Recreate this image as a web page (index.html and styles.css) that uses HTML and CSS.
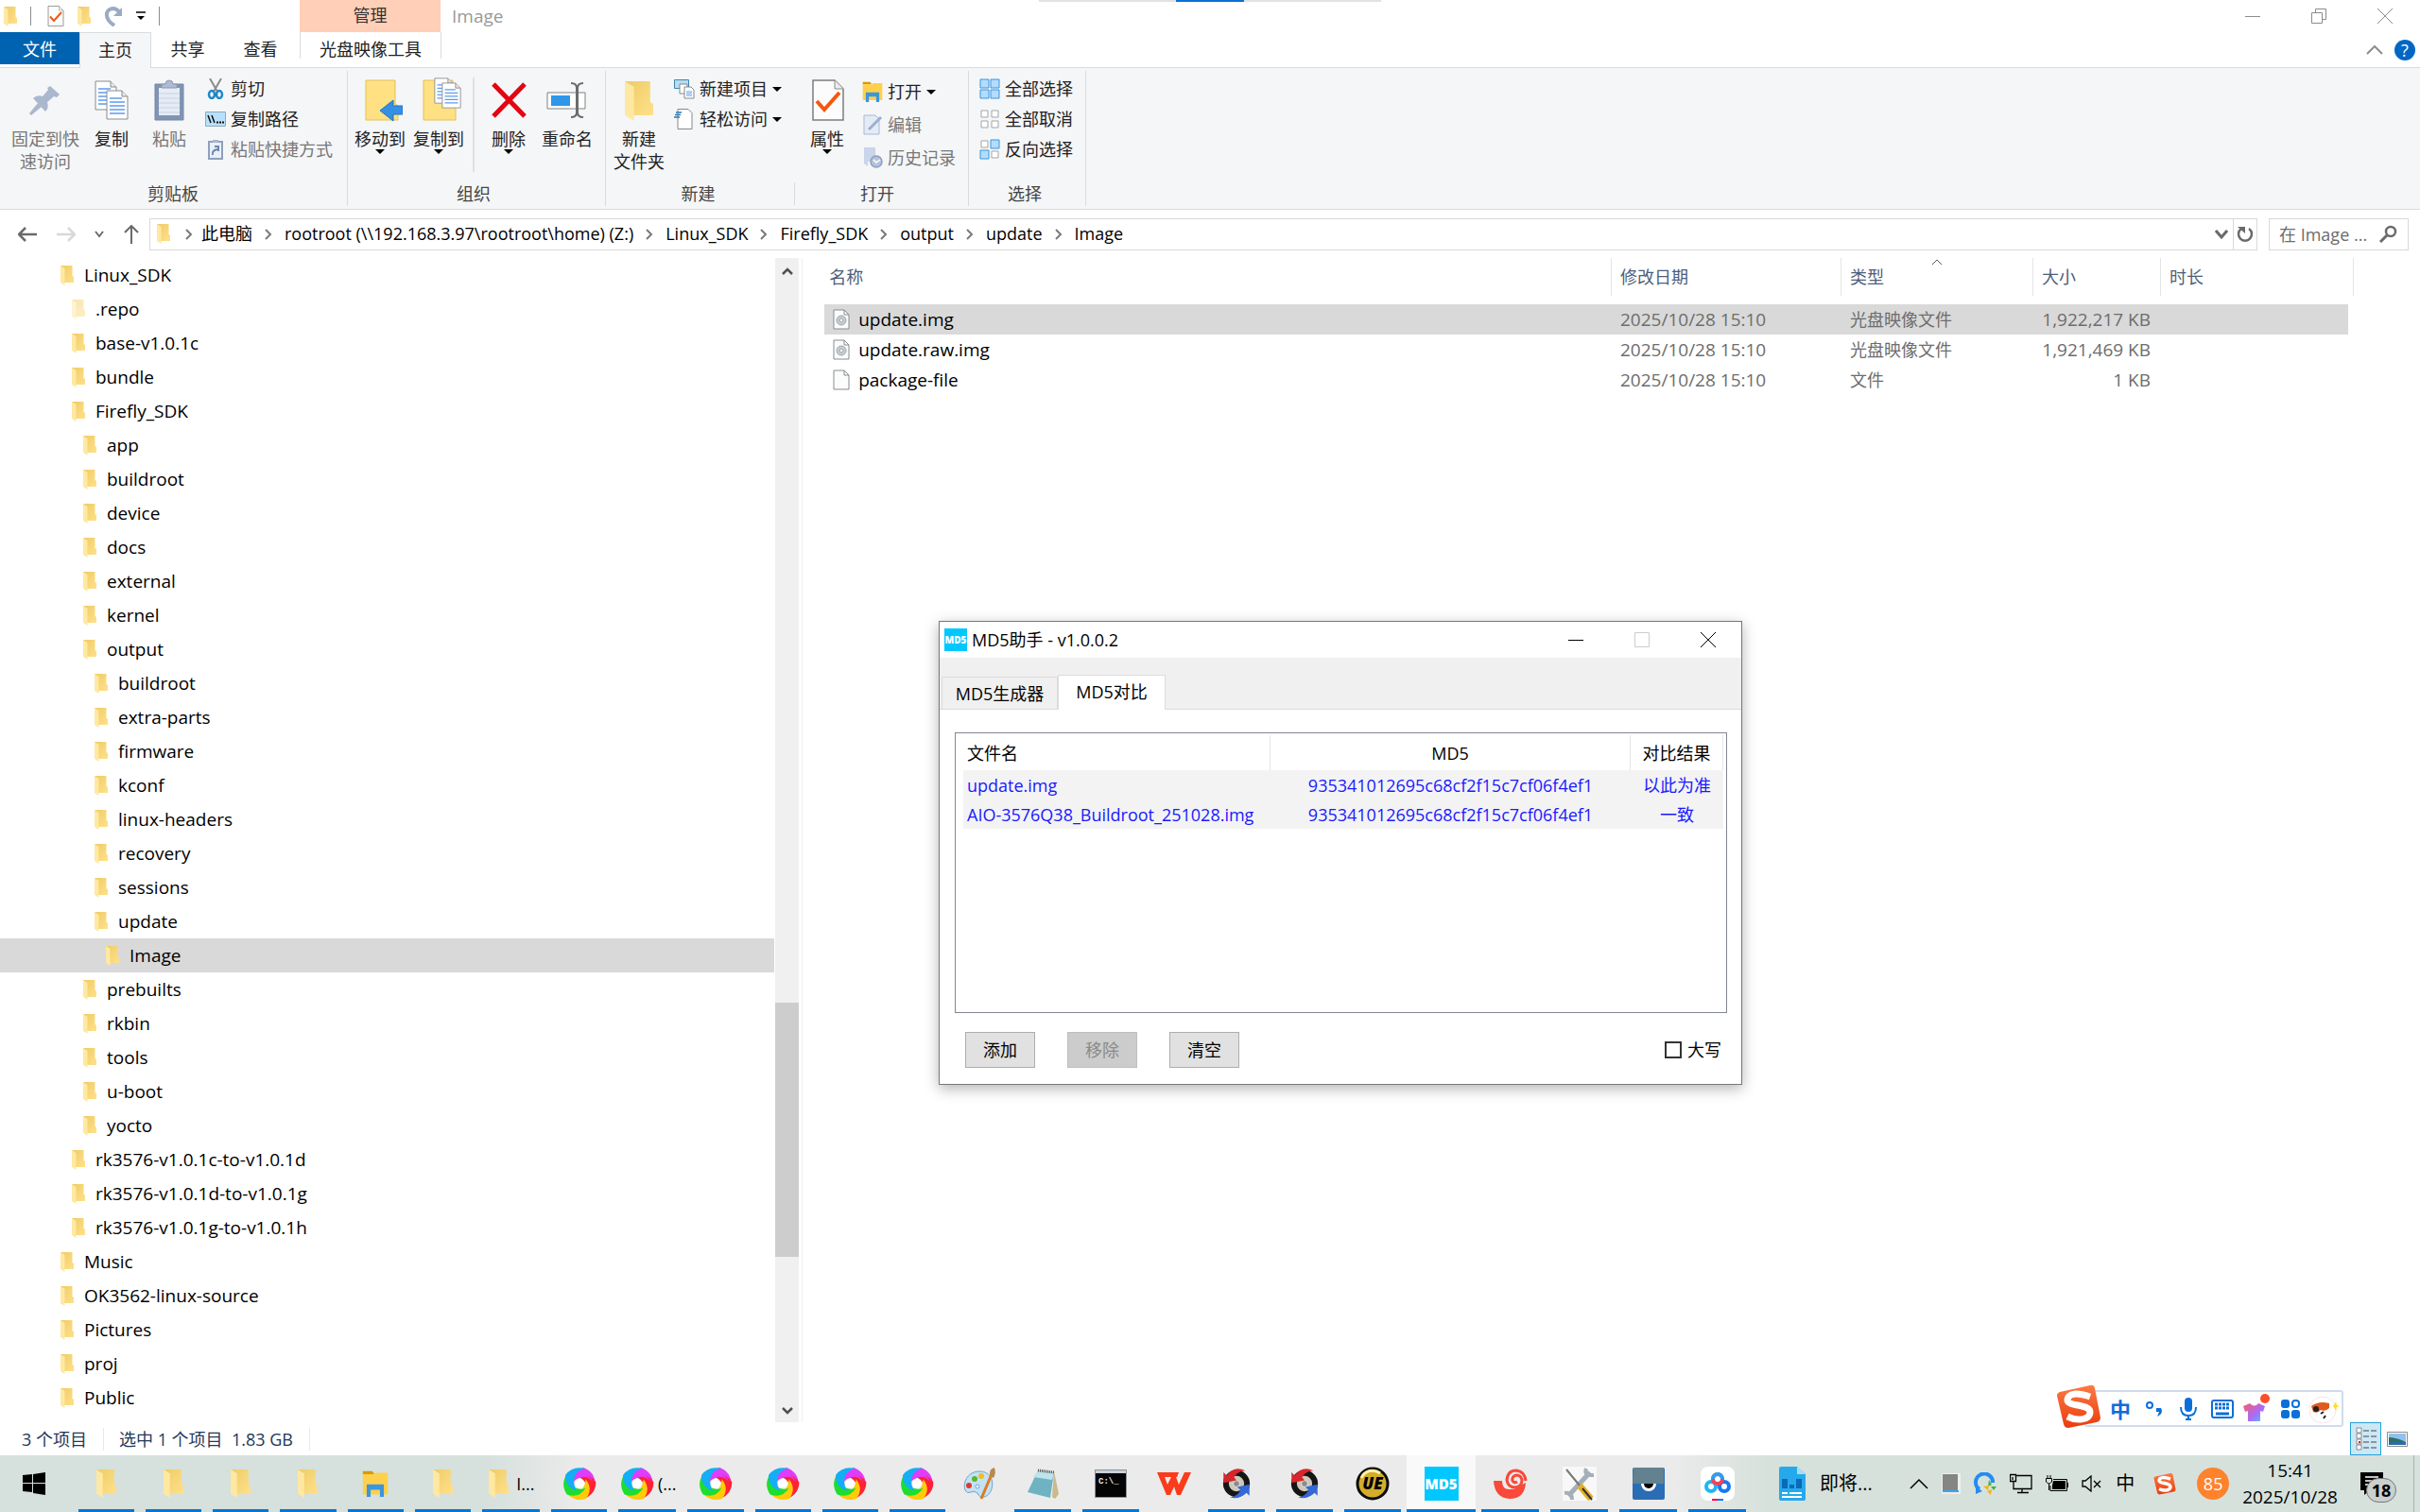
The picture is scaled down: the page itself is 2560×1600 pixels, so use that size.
FILE: index.html
```html
<!DOCTYPE html>
<html lang="zh-CN">
<head>
  <meta charset="UTF-8" />
  <meta name="viewport" content="width=device-width, initial-scale=1" />
  <title>Image</title>
  <link rel="stylesheet" href="styles.css">
</head>
<body>
  <!-- Shared icons -->
  <svg class="defs" aria-hidden="true">
    <defs>
      <linearGradient id="gold" x1="0" x2="1" y1="0" y2="1">
        <stop offset="0" stop-color="#eecb67"/>
        <stop offset="1" stop-color="#ffe18a"/>
      </linearGradient>
      <linearGradient id="sogou" x1="0" x2="0" y1="0" y2="1">
        <stop offset="0" stop-color="#fb7a45"/>
        <stop offset="1" stop-color="#ea3c0c"/>
      </linearGradient>
    </defs>
    <symbol id="folder" viewBox="0 0 14 21" preserveAspectRatio="none">
      <path d="M0 0h12.5v11l1.5 1v6H4z" fill="url(#gold)"/>
      <path d="M0 0l4.5 3v18L0 18z" fill="#ffe8a2"/>
    </symbol>
    <symbol id="page" viewBox="0 0 18 22">
      <path d="M1 1h11l5 5v15H1z" fill="#fbfcfd" stroke="#8b8b8b"/>
      <path d="M12 1v5h5" fill="none" stroke="#8b8b8b"/>
    </symbol>
    <symbol id="disc" viewBox="0 0 18 22">
      <path d="M1 1h11l5 5v15H1z" fill="#fbfcfd" stroke="#8b8b8b"/>
      <path d="M12 1v5h5" fill="none" stroke="#8b8b8b"/>
      <circle cx="9" cy="12" r="5" fill="#c9ced1" stroke="#a0a7ab"/>
      <circle cx="9" cy="12" r="2" fill="#fff" stroke="#9aa0a4"/>
    </symbol>
    <symbol id="lines" viewBox="0 0 24 32">
      <path d="M1 1h16l6 6v24H1z" fill="#fff" stroke="#8a8a8a"/>
      <path d="M17 1v6h6" fill="#e8e8e8" stroke="#8a8a8a"/>
      <path d="M4 9h13M4 13h16M4 17h16M4 21h16M4 25h16" stroke="#5e9cec" stroke-width="1.3"/>
    </symbol>
    <symbol id="explorer" viewBox="0 0 32 34">
      <path d="M0 1h12l3 4H0z" fill="#d99a00"/>
      <path d="M0 5h15l2-2h15v28H0z" fill="#ffd04c"/>
      <path d="M5 18h22v16h-5v-9H10v9H5z" fill="#3a96dd"/>
    </symbol>
    <symbol id="check" viewBox="0 0 34 44">
      <path d="M1 1h23l9 9v33H1z" fill="#fcfcfc" stroke="#7c7c7c" stroke-width="1.5"/>
      <path d="M24 1v9h9" fill="#ececec" stroke="#8b8b8b"/>
      <path d="M5 23l8 9 16-18" fill="none" stroke="#f4570f" stroke-width="4"/>
    </symbol>
    <symbol id="swirl" viewBox="0 0 36 36">
      <path d="M10 18Q9 5 22 1q12 4 13 18-4-9-13-8-8 1-12 7z" fill="#e03cfa"/>
      <path d="M10 18Q9 5 22 1q12 4 13 18-4-9-13-8-8 1-12 7z" fill="#ff2134" transform="rotate(72 18 18)"/>
      <path d="M10 18Q9 5 22 1q12 4 13 18-4-9-13-8-8 1-12 7z" fill="#ffcb08" transform="rotate(144 18 18)"/>
      <path d="M10 18Q9 5 22 1q12 4 13 18-4-9-13-8-8 1-12 7z" fill="#1ddd2e" transform="rotate(216 18 18)"/>
      <path d="M10 18Q9 5 22 1q12 4 13 18-4-9-13-8-8 1-12 7z" fill="#13aef5" transform="rotate(288 18 18)"/>
      <path d="M12 14Q16 7 23 8q7 2 9 8-5-6-11-5-6 1-9 3z" fill="#e03cfa"/>
      <circle cx="18" cy="18" r="5" fill="#fff"/>
    </symbol>
    <symbol id="sogou-s" viewBox="0 0 48 48">
      <path d="M4 9L36 2q4-1 5 3l6 31q0 4-4 5l-30 6q-4 0-5-4L1 13q0-3 3-4z" fill="url(#sogou)"/>
      <path d="M36 14Q14 7 12 17c-1 8 25 4 24 14-1 8-14 9-24 4" fill="none" stroke="#fff" stroke-width="7"/>
    </symbol>
    <symbol id="wheel" viewBox="0 0 34 42">
      <circle cx="17" cy="21" r="13" fill="#cfc8b8" stroke="#161616" stroke-width="7"/>
      <circle cx="17" cy="21" r="4" fill="#8c8c8c" stroke="#eee"/>
      <path d="M1 20V7l4 4Q14-2 28 5q-9 0-14 8l3 4z" fill="#d8262c"/>
      <path d="M33 22v14l-4-4q-8 9-20 6 9-1 13-9l-4-4z" fill="#3268d8"/>
    </symbol>
    <symbol id="chevron" viewBox="0 0 8 12"><path d="M1 1l5 5-5 5" fill="none" stroke="#7a7a7a" stroke-width="2"/></symbol>
    <symbol id="clipboard" viewBox="0 0 32 44">
      <path d="M1 5h30v38H1z" fill="#8194b4" stroke="#7486a6"/>
      <path d="M5 9h22v29H5z" fill="#e6ecf5"/>
      <path d="M5 15h22M5 20h22M5 25h22M5 30h22M5 35h22" stroke="#c6d2e3"/>
      <path d="M8 9V5h4q0-4 4-4t4 4h4v4z" fill="#aebbd0" stroke="#8a9ab6"/>
    </symbol>
  </svg>

  <div class="screen-notch"><span></span></div>

  <!-- Title bar -->
  <header class="titlebar">
    <div class="quick-access">
      <svg class="ico-folder"><use href="#folder"/></svg>
      <i class="bar"></i>
      <button aria-label="属性"><svg width="18" height="22"><use href="#check"/></svg></button>
      <button aria-label="新建文件夹"><svg class="ico-folder"><use href="#folder"/></svg></button>
      <button aria-label="恢复"><svg width="20" height="22" viewBox="0 0 20 22"><path d="M11 21C0 14 1 4 9 3q5 0 8 5" fill="none" stroke="#9aabc6" stroke-width="4"/><path d="M19 2v9h-9z" fill="#9aabc6"/></svg></button>
      <button aria-label="自定义"><svg width="10" height="10" viewBox="0 0 10 10"><path d="M0 1h10" stroke="#000" stroke-width="1.5"/><path d="M1 5h8L5 9z"/></svg></button>
      <i class="bar"></i>
    </div>
    <div class="context-tab">管理</div>
    <h1>Image</h1>
    <div class="window-buttons">
      <button aria-label="最小化"><svg width="16" height="16"><path d="M0 8.500h16" stroke="#8c8c8c"/></svg></button>
      <button aria-label="还原"><svg width="16" height="16"><path d="M.5 4.500h11v11h-11zM4.500 4V.5h11v11H12" fill="none" stroke="#8c8c8c"/></svg></button>
      <button aria-label="关闭"><svg width="16" height="16"><path d="M0 0l16 16M16 0L0 16" stroke="#8c8c8c"/></svg></button>
    </div>
  </header>

  <!-- Ribbon tabs -->
  <nav class="tabs">
    <a href="#" class="file">文件</a>
    <a href="#" class="active">主页</a>
    <a href="#">共享</a>
    <a href="#">查看</a>
    <a href="#" class="tools">光盘映像工具</a>
    <div class="tabs-right">
      <button aria-label="折叠功能区"><svg width="18" height="10" viewBox="0 0 18 10"><path d="M1 9l8-8 8 8" fill="none" stroke="#8c8c8c" stroke-width="2"/></svg></button>
      <button class="help" aria-label="帮助">?</button>
    </div>
  </nav>

  <!-- Ribbon -->
  <section class="ribbon">
    <div class="group clip">
      <div class="tools-row">
        <button class="big wide" disabled>
          <svg viewBox="0 0 48 48"><g fill="#a9b7cf"><path d="M29 9l10 9-3 3-3-1-7 6q2 7-2 10L11 22q4-4 10-2l6-7-1-2z"/><path d="M16 27l4 4L9 40l-2-2z"/></g></svg>
          <span>固定到快速访问</span>
        </button>
        <button class="big copy">
          <svg viewBox="0 0 48 48"><use href="#lines" x="6" y="3" width="24" height="32"/><use href="#lines" x="18" y="13" width="24" height="32"/></svg>
          <span>复制</span>
        </button>
        <button class="big paste" disabled>
          <svg viewBox="0 0 48 48"><use href="#clipboard" x="8" y="2" width="32" height="44"/></svg>
          <span>粘贴</span>
        </button>
        <div class="stack">
          <button><svg viewBox="0 0 22 22"><path d="M5 0l8 14M17 0L9 14" stroke="#8c8c8c" stroke-width="2"/><g fill="none" stroke="#1e88c9" stroke-width="2.500"><ellipse cx="7" cy="17" rx="3" ry="4"/><ellipse cx="15" cy="17" rx="3" ry="4"/></g></svg>剪切</button>
          <button><svg viewBox="0 0 22 22"><path d="M.5 3.500h21v15H.5z" fill="#b9e0fb" stroke="#8ca9bf"/><path d="M3 7l3 8M7 7l3 8" stroke="#111" stroke-width="1.500"/><path d="M12 14.500h8" stroke="#111" stroke-width="2" stroke-dasharray="2 1"/></svg>复制路径</button>
          <button disabled><svg viewBox="0 0 22 22"><path d="M4 3h14v18H4z" fill="#eaf0f8" stroke="#8fa0bd" stroke-width="2"/><path d="M8 4V1h6v3" fill="#a9b7cf"/><path d="M8 17q-1-5 5-6M10 8h4v5" fill="none" stroke="#6d86b2" stroke-width="2"/></svg>粘贴快捷方式</button>
        </div>
      </div>
      <h2>剪贴板</h2>
    </div>

    <div class="group organize">
      <div class="tools-row">
        <button class="big drop">
          <svg viewBox="0 0 48 48"><path d="M9 3h31v25l3 2v15H9z" fill="#ffe184" stroke="#e3bf57"/><path d="M48 30v9H38v7L24 35l14-11v6z" fill="#3590e4" stroke="#2273bd"/></svg>
          <span>移动到</span>
        </button>
        <button class="big drop">
          <svg viewBox="0 0 48 48"><path d="M8 3h31v25l3 2v15H8z" fill="#ffe184" stroke="#e3bf57"/><use href="#lines" x="19" y="0" width="21" height="28"/><use href="#lines" x="27" y="5" width="21" height="28"/></svg>
          <span>复制到</span>
        </button>
        <i class="split"></i>
        <button class="big drop">
          <svg viewBox="0 0 48 48"><path d="M8 7l33 34M41 7L8 41" stroke="#e20613" stroke-width="5"/></svg>
          <span>删除</span>
        </button>
        <button class="big">
          <svg viewBox="0 0 48 48"><path d="M3 16h40v17H3z" fill="#fff" stroke="#808080"/><path d="M7 19h20v11H7z" fill="#2f96ea"/><path d="M28 6q6 0 6 5v26q0 5-6 5M41 6q-6 0-6 5v26q0 5 6 5" fill="none" stroke="#6c6c6c" stroke-width="2"/></svg>
          <span>重命名</span>
        </button>
      </div>
      <h2>组织</h2>
    </div>

    <div class="group create">
      <div class="tools-row">
        <button class="big copy">
          <svg viewBox="0 0 48 48"><use href="#folder" x="9" y="4" width="30" height="42"/></svg>
          <span>新建<br>文件夹</span>
        </button>
        <div class="stack">
          <button class="more"><svg viewBox="0 0 22 22"><path d="M.5 1.500h15v9H.5z" fill="#b9dcef" stroke="#3d85ad"/><path d="M6 6h8v10H6z" fill="#fff" stroke="#888"/><path d="M11 9h7l3 3v9H11z" fill="#fff" stroke="#888"/><path d="M13 14h6M13 16h6M13 18h6" stroke="#5e9cec"/></svg>新建项目</button>
          <button class="more"><svg viewBox="0 0 22 22"><path d="M4 .5h11l4 4v17H4z" fill="#fff" stroke="#888"/><path d="M2 4h6M1 6.500h6M0 9h6" stroke="#2b77ae" stroke-width="1.500"/></svg>轻松访问</button>
        </div>
      </div>
      <h2>新建</h2>
    </div>

    <div class="group open">
      <div class="tools-row">
        <button class="big drop copy">
          <svg viewBox="0 0 48 48"><use href="#check" x="8" y="2" width="34" height="44"/></svg>
          <span>属性</span>
        </button>
        <div class="stack loose">
          <button class="more"><svg viewBox="0 0 22 22"><use href="#explorer" width="22" height="22"/></svg>打开</button>
          <button disabled><svg viewBox="0 0 22 22"><path d="M2 1h12l4 4v16H2z" fill="#e4ebf6" stroke="#a9b9d2"/><path d="M7 16l13-13" stroke="#9db0cf" stroke-width="3"/></svg>编辑</button>
          <button disabled><svg viewBox="0 0 22 22"><path d="M2 0h12v15H6v5l-4-3z" fill="#c8d5ea"/><circle cx="15" cy="15" r="6" fill="#b4c3dc" stroke="#8da0c1" stroke-width="1.500"/><path d="M12 13l3 3 4-3" fill="none" stroke="#fff" stroke-width="1.500"/></svg>历史记录</button>
        </div>
      </div>
      <h2>打开</h2>
    </div>

    <div class="group select">
      <div class="tools-row">
        <div class="stack">
          <button><svg viewBox="0 0 22 22"><path d="M1 1h9v9H1zM12 1h9v9h-9zM1 12h9v9H1zM12 12h9v9h-9z" fill="#b3dcfd" stroke="#3a96dd"/></svg>全部选择</button>
          <button><svg viewBox="0 0 22 22"><path d="M2 2h7v7H2zM13 2h7v7h-7zM2 13h7v7H2zM13 13h7v7h-7z" fill="#fff" stroke="#a5a5a5"/></svg>全部取消</button>
          <button><svg viewBox="0 0 22 22"><path d="M2 2h7v7H2zM13 13h7v7h-7z" fill="#fff" stroke="#a5a5a5"/><path d="M12 1h9v9h-9zM1 12h9v9H1z" fill="#b3dcfd" stroke="#3a96dd"/></svg>反向选择</button>
        </div>
      </div>
      <h2>选择</h2>
    </div>
  </section>

  <!-- Address bar -->
  <div class="address-row">
    <div class="nav-buttons">
      <button aria-label="后退"><svg width="20" height="16" viewBox="0 0 20 16"><path d="M1 8h19M8 1L1 8l7 7" fill="none" stroke="#6a6a6a" stroke-width="2.500"/></svg></button>
      <button aria-label="前进"><svg width="20" height="16" viewBox="0 0 20 16"><path d="M0 8h19M12 1l7 7-7 7" fill="none" stroke="#d8d8d8" stroke-width="2.500"/></svg></button>
      <button aria-label="最近位置"><svg width="10" height="8" viewBox="0 0 10 8"><path d="M1 1l4 5 4-5" fill="none" stroke="#6a6a6a" stroke-width="2"/></svg></button>
      <button aria-label="上移"><svg width="16" height="20" viewBox="0 0 16 20"><path d="M8 20V1M1 8l7-7 7 7" fill="none" stroke="#6a6a6a" stroke-width="2"/></svg></button>
    </div>
    <nav class="crumbs">
      <svg class="ico-folder"><use href="#folder"/></svg>
      <svg class="sep"><use href="#chevron"/></svg><a href="#">此电脑</a>
      <svg class="sep"><use href="#chevron"/></svg><a href="#">rootroot (\\192.168.3.97\rootroot\home) (Z:)</a>
      <svg class="sep"><use href="#chevron"/></svg><a href="#">Linux_SDK</a>
      <svg class="sep"><use href="#chevron"/></svg><a href="#">Firefly_SDK</a>
      <svg class="sep"><use href="#chevron"/></svg><a href="#">output</a>
      <svg class="sep"><use href="#chevron"/></svg><a href="#">update</a>
      <svg class="sep"><use href="#chevron"/></svg><a href="#">Image</a>
      <button class="history" aria-label="以前的位置"><svg width="14" height="12" viewBox="0 0 14 12"><path d="M1 2l6 7 6-7" fill="none" stroke="#6a6a6a" stroke-width="3"/></svg></button>
      <button class="refresh" aria-label="刷新"><svg width="18" height="18" viewBox="0 0 18 18"><path d="M13 3a7 7 0 1 1-8 0" fill="none" stroke="#6a6a6a" stroke-width="2.500"/><path d="M1 1h8v7z" fill="#6a6a6a"/></svg></button>
    </nav>
    <label class="search">
      <input type="text" aria-label="搜索" placeholder="在 Image ...">
      <svg width="20" height="20" viewBox="0 0 20 20"><circle cx="12" cy="7" r="5" fill="none" stroke="#6a6a6a" stroke-width="2.500"/><path d="M8 11l-7 7" stroke="#6a6a6a" stroke-width="3"/></svg>
    </label>
  </div>

  <main class="panes">
    <!-- Folder tree -->
    <ul class="tree">
      <li class="l0"><svg class="ico-folder"><use href="#folder"/></svg><a href="#">Linux_SDK</a></li>
      <li class="l1 hidden-item"><svg class="ico-folder"><use href="#folder"/></svg><a href="#">.repo</a></li>
      <li class="l1"><svg class="ico-folder"><use href="#folder"/></svg><a href="#">base-v1.0.1c</a></li>
      <li class="l1"><svg class="ico-folder"><use href="#folder"/></svg><a href="#">bundle</a></li>
      <li class="l1"><svg class="ico-folder"><use href="#folder"/></svg><a href="#">Firefly_SDK</a></li>
      <li class="l2"><svg class="ico-folder"><use href="#folder"/></svg><a href="#">app</a></li>
      <li class="l2"><svg class="ico-folder"><use href="#folder"/></svg><a href="#">buildroot</a></li>
      <li class="l2"><svg class="ico-folder"><use href="#folder"/></svg><a href="#">device</a></li>
      <li class="l2"><svg class="ico-folder"><use href="#folder"/></svg><a href="#">docs</a></li>
      <li class="l2"><svg class="ico-folder"><use href="#folder"/></svg><a href="#">external</a></li>
      <li class="l2"><svg class="ico-folder"><use href="#folder"/></svg><a href="#">kernel</a></li>
      <li class="l2"><svg class="ico-folder"><use href="#folder"/></svg><a href="#">output</a></li>
      <li class="l3"><svg class="ico-folder"><use href="#folder"/></svg><a href="#">buildroot</a></li>
      <li class="l3"><svg class="ico-folder"><use href="#folder"/></svg><a href="#">extra-parts</a></li>
      <li class="l3"><svg class="ico-folder"><use href="#folder"/></svg><a href="#">firmware</a></li>
      <li class="l3"><svg class="ico-folder"><use href="#folder"/></svg><a href="#">kconf</a></li>
      <li class="l3"><svg class="ico-folder"><use href="#folder"/></svg><a href="#">linux-headers</a></li>
      <li class="l3"><svg class="ico-folder"><use href="#folder"/></svg><a href="#">recovery</a></li>
      <li class="l3"><svg class="ico-folder"><use href="#folder"/></svg><a href="#">sessions</a></li>
      <li class="l3"><svg class="ico-folder"><use href="#folder"/></svg><a href="#">update</a></li>
      <li class="l4 selected"><svg class="ico-folder"><use href="#folder"/></svg><a href="#">Image</a></li>
      <li class="l2"><svg class="ico-folder"><use href="#folder"/></svg><a href="#">prebuilts</a></li>
      <li class="l2"><svg class="ico-folder"><use href="#folder"/></svg><a href="#">rkbin</a></li>
      <li class="l2"><svg class="ico-folder"><use href="#folder"/></svg><a href="#">tools</a></li>
      <li class="l2"><svg class="ico-folder"><use href="#folder"/></svg><a href="#">u-boot</a></li>
      <li class="l2"><svg class="ico-folder"><use href="#folder"/></svg><a href="#">yocto</a></li>
      <li class="l1"><svg class="ico-folder"><use href="#folder"/></svg><a href="#">rk3576-v1.0.1c-to-v1.0.1d</a></li>
      <li class="l1"><svg class="ico-folder"><use href="#folder"/></svg><a href="#">rk3576-v1.0.1d-to-v1.0.1g</a></li>
      <li class="l1"><svg class="ico-folder"><use href="#folder"/></svg><a href="#">rk3576-v1.0.1g-to-v1.0.1h</a></li>
      <li class="l0"><svg class="ico-folder"><use href="#folder"/></svg><a href="#">Music</a></li>
      <li class="l0"><svg class="ico-folder"><use href="#folder"/></svg><a href="#">OK3562-linux-source</a></li>
      <li class="l0"><svg class="ico-folder"><use href="#folder"/></svg><a href="#">Pictures</a></li>
      <li class="l0"><svg class="ico-folder"><use href="#folder"/></svg><a href="#">proj</a></li>
      <li class="l0"><svg class="ico-folder"><use href="#folder"/></svg><a href="#">Public</a></li>
    </ul>
    <div class="scrollbar">
      <svg width="12" height="8" viewBox="0 0 12 8"><path d="M1 7l5-5 5 5" fill="none" stroke="#505050" stroke-width="2.500"/></svg>
      <div class="track"><span class="thumb"></span></div>
      <svg width="12" height="8" viewBox="0 0 12 8"><path d="M1 1l5 5 5-5" fill="none" stroke="#505050" stroke-width="2.500"/></svg>
    </div>

    <!-- File list -->
    <div class="files">
      <table>
        <colgroup><col><col class="c-date"><col class="c-type"><col class="c-size"><col class="c-len"></colgroup>
        <thead>
          <tr><th>名称</th><th>修改日期</th><th class="sorted">类型<svg width="12" height="7" viewBox="0 0 12 7"><path d="M1 6l5-5 5 5" fill="none" stroke="#5a5a5a"/></svg></th><th>大小</th><th>时长</th></tr>
        </thead>
        <tbody>
          <tr class="selected"><td><svg><use href="#disc"/></svg><a href="#">update.img</a></td><td>2025/10/28 15:10</td><td>光盘映像文件</td><td>1,922,217 KB</td><td></td></tr>
          <tr><td><svg><use href="#disc"/></svg><a href="#">update.raw.img</a></td><td>2025/10/28 15:10</td><td>光盘映像文件</td><td>1,921,469 KB</td><td></td></tr>
          <tr><td><svg><use href="#page"/></svg><a href="#">package-file</a></td><td>2025/10/28 15:10</td><td>文件</td><td>1 KB</td><td></td></tr>
        </tbody>
      </table>
    </div>
  </main>

  <!-- Status bar -->
  <footer class="status">
    <span>3 个项目</span>
    <span>选中 1 个项目&nbsp; 1.83 GB</span>
    <div class="views">
      <button class="on" aria-label="详细信息"><svg width="22" height="26" viewBox="0 0 22 26"><path d="M1 1h5v5H1zM1 7h5v5H1zM1 13h5v5H1zM1 19h5v5H1z" fill="#fff" stroke="#8a8a8a"/><path d="M8 4h14M8 10h14M8 16h14M8 22h14" stroke="#7a7a7a" stroke-width="1.500" stroke-dasharray="6 2"/><path d="M3 15h2v2H3z" fill="#c22"/></svg></button>
      <button aria-label="大图标"><svg width="22" height="16" viewBox="0 0 22 16"><path d="M.5.5h21v15H.5z" fill="#fff" stroke="#8a8a8a"/><path d="M2 2h18v12H2z" fill="#8fc1f0"/><path d="M2 6q8 0 18 5v3H2z" fill="#33705c"/><path d="M2 11h18v3H2z" fill="#2a6ea5"/></svg></button>
    </div>
  </footer>

  <!-- Taskbar -->
  <div class="taskbar">
    <button class="start" aria-label="开始"><svg width="24" height="24" viewBox="0 0 24 24"><path d="M0 3l10-1v9H0zM11 2l13-2v11H11zM0 12h10v9L0 20zM11 12h13v12l-13-2z"/></svg></button>
    <div class="task-group folders">
      <button class="running"><svg width="21" height="30"><use href="#folder"/></svg></button>
      <button class="running"><svg width="21" height="30"><use href="#folder"/></svg></button>
      <button class="running"><svg width="21" height="30"><use href="#folder"/></svg></button>
      <button class="running"><svg width="21" height="30"><use href="#folder"/></svg></button>
      <button class="running"><svg width="32" height="28"><use href="#explorer"/></svg></button>
      <button class="running"><svg width="21" height="30"><use href="#folder"/></svg></button>
      <button class="running named"><svg width="21" height="30"><use href="#folder"/></svg>I...</button>
    </div>
    <div class="task-group browsers">
      <button class="running"><svg width="36" height="36"><use href="#swirl"/></svg></button>
      <button class="running named"><svg width="36" height="36"><use href="#swirl"/></svg>(...</button>
      <button class="running"><svg width="36" height="36"><use href="#swirl"/></svg></button>
      <button class="running"><svg width="36" height="36"><use href="#swirl"/></svg></button>
      <button class="running"><svg width="36" height="36"><use href="#swirl"/></svg></button>
      <button class="running"><svg width="36" height="36"><use href="#swirl"/></svg></button>
    </div>
    <div class="task-group apps">
      <button class="pinned" aria-label="画图"><svg width="36" height="36" viewBox="0 0 36 36"><path d="M17 5C6 5-1 15 2 25q2 4 6 2t7 1q2 5 7 4c11-2 14-27-5-27z" fill="#c4e2f5" stroke="#6aa5cb"/><circle cx="6" cy="20" r="3" fill="#e0392b"/><circle cx="12" cy="13" r="3" fill="#5cb531"/><circle cx="19" cy="10" r="3" fill="#f5bb1c"/><circle cx="15" cy="21" r="2" fill="#fff" stroke="#6aa5cb"/><path d="M19 34L30 8" stroke="#dc7c21" stroke-width="3"/><path d="M28 10q-1-8 5-9 2 6-1 11z" fill="#b98850"/></svg></button>
      <button class="running" aria-label="记事本"><svg width="34" height="34" viewBox="0 0 34 34"><path d="M29 4l5 24-4 5-3-2z" fill="#c9b98c"/><path d="M12 3l17 2-4 27L1 26z" fill="#6fb3c2"/><path d="M12 3l17 2-2 8L7 10z" fill="#bfe3eb"/><path d="M12 3l17 2" stroke="#555" stroke-width="3" stroke-dasharray="1 1"/></svg></button>
      <button class="running" aria-label="命令提示符"><svg width="34" height="30" viewBox="0 0 34 30"><path d="M.5.5h33v29H.5z" fill="#050505" stroke="#8b9298"/><path d="M1 1h32v3H1z" fill="#c8d0d8"/><text x="4" y="15" font-family="Liberation Mono, monospace" font-size="9" font-weight="700" fill="#eee">C:\_</text></svg></button>
      <button class="pinned" aria-label="WPS"><svg width="36" height="26" viewBox="0 0 36 26"><path d="M0 1h23l-2 5H8l3 8 4-8h5l3 8 6-13h7L25 25h-4l-3-9-4 9h-4z" fill="#fa3b1c"/></svg></button>
      <button class="running"><svg width="34" height="36"><use href="#wheel"/></svg></button>
      <button class="running"><svg width="34" height="36"><use href="#wheel"/></svg></button>
      <button class="running" aria-label="UltraEdit"><svg width="36" height="36" viewBox="0 0 36 36"><circle cx="18" cy="18" r="16" fill="#d3ad2b" stroke="#0c0c0c" stroke-width="3"/><path d="M6 12a13 13 0 0 1 20-5" fill="none" stroke="#fff2a3" stroke-width="3"/><text x="18" y="24" text-anchor="middle" font-family="Open Sans, sans-serif" font-weight="800" font-style="italic" font-size="17">UE</text></svg></button>
      <button class="running current" aria-label="MD5助手"><span class="md5-logo">MD5</span></button>
      <button class="running"><svg width="36" height="32" viewBox="0 0 36 32"><path d="M0 13h9q0 10 9 9 7 0 12-5l4-2q-1 17-17 17Q1 31 0 13z" fill="#f8493b"/><path d="M34 13q-1-10-10-11-9 0-10 10 1 8 9 8 7-1 7-8-1-5-6-5-5 1-4 6 2 3 5 1" fill="none" stroke="#f8493b" stroke-width="3"/></svg></button>
      <button class="running"><svg width="36" height="36" viewBox="0 0 36 36"><path d="M0 0h36v36H0z" fill="#f8f8f8"/><path d="M6 31L29 6" stroke="#a4afb9" stroke-width="5"/><path d="M25 2q-3 8 8 7M2 28q8-2 8 7" fill="none" stroke="#a4afb9" stroke-width="4"/><path d="M4 3l14 17" stroke="#777" stroke-width="2"/><path d="M18 20l12 14" stroke="#e5b022" stroke-width="7"/><path d="M21 23l10 12" stroke="#333" stroke-width="2"/></svg></button>
      <button class="running"><svg width="34" height="34" viewBox="0 0 34 34"><rect width="34" height="34" rx="2" fill="#2a6db4"/><path d="M1 0h32v17H0z" fill="#638290"/><path d="M9 17h16a8 8 0 0 1-16 0z" fill="#fff"/><path d="M12 17h10a5 5 0 0 1-10 0z"/></svg></button>
      <button class="running"><svg width="36" height="36" viewBox="0 0 36 36"><rect width="36" height="36" rx="8" fill="#fff"/><g fill="none" stroke-width="4"><circle cx="11" cy="21" r="5" stroke="#22b4f3"/><circle cx="25" cy="21" r="5" stroke="#1679f5"/><circle cx="18" cy="13" r="5" stroke="#f5405d"/><path d="M13 13a5 5 0 0 1 10 0" stroke="#22a4f5"/></g><path d="M12 34h6v2h-6z" fill="#f04"/><path d="M18 34h6v2h-6z" fill="#17f"/></svg></button>
    </div>
    <button class="news"><svg width="28" height="36" viewBox="0 0 28 36"><path d="M2 0h17l9 8v26q0 2-2 2H2q-2 0-2-2V2q0-2 2-2z" fill="#26a9ec"/><path d="M19 0v8h9z" fill="#a5def8"/><path d="M3 13h6v10H3zM11 19h5v4h-5zM18 13h6v10h-6z" fill="#0b69b7"/><path d="M3 28h6M11 28h13M3 32h21" stroke="#fff" stroke-width="2"/></svg>即将...</button>

    <div class="tray">
      <button aria-label="显示隐藏的图标"><svg width="20" height="12" viewBox="0 0 20 12"><path d="M1 11l9-9 9 9" fill="none" stroke="#000" stroke-width="1.500"/></svg></button>
      <button><svg width="20" height="22" viewBox="0 0 20 22"><path d="M0 0h20v22H0z" fill="#eee"/><path d="M1 1h16v18H1z" fill="#858585"/><path d="M1 19h17" stroke="#3aa6e8" stroke-width="2"/></svg></button>
      <button><svg width="24" height="24" viewBox="0 0 24 24"><path d="M6 18A9 9 0 1 1 20 11" fill="none" stroke="#248cf2" stroke-width="4"/><path d="M2 23v-8l7 5z" fill="#248cf2"/><path d="M16 8l3 5-4 2z" fill="#3bb64a"/><path d="M18 15h6l-3 4z" fill="#3bb64a"/><path d="M10 15l6-1-1 5zM14 20l5-2-1 6z" fill="#f6b21b"/></svg></button>
      <button aria-label="网络"><svg width="24" height="22" viewBox="0 0 24 22"><path d="M7 2.500h16v14H4V9M13 17v3M8 20.500h12M.5 1.500h6v7h-6zM3 4v3" fill="none" stroke="#000" stroke-width="1.300"/></svg></button>
      <button aria-label="电池"><svg width="24" height="20" viewBox="0 0 24 20"><path d="M8 5.500h14.500v12H5V12" fill="none" stroke="#000"/><path d="M8 7h13v9H7v-4z"/><path d="M23 9h1v5h-1z"/><path d="M.5 4.500h6V8q-3 4-6 0zM2 1v3M5 1v3M3.500 10v7" fill="#d7e1dd" stroke="#000"/></svg></button>
      <button aria-label="音量"><svg width="22" height="18" viewBox="0 0 22 18"><path d="M1 6h3l6-5v16l-6-5H1zM13 6l7 7M20 6l-7 7" fill="none" stroke="#000" stroke-width="1.300"/></svg></button>
      <button class="ime">中</button>
      <button class="sogou"><svg width="24" height="26"><use href="#sogou-s"/></svg></button>
      <button class="temp">85</button>
      <time>15:41<br>2025/10/28</time>
      <button class="notice" aria-label="通知"><svg width="24" height="24" viewBox="0 0 24 24"><path d="M0 0h24v19H10l-6 5v-5H0z"/><path d="M5 5h14M5 9h14M5 13h8" stroke="#fff" stroke-width="1.500"/></svg><b>18</b></button>
    </div>
  </div>

  <!-- Input method bar -->
  <div class="ime-bar">
    <svg class="logo"><use href="#sogou-s"/></svg>
    <button class="lang">中</button>
    <button aria-label="标点"><svg width="18" height="18" viewBox="0 0 18 18"><circle cx="4" cy="5" r="3" fill="none" stroke="#0a6fd8" stroke-width="2"/><path d="M11 8h5q3 6-4 9l2-5h-3z" fill="#0a6fd8"/></svg></button>
    <button aria-label="语音"><svg width="18" height="24" viewBox="0 0 18 24"><rect x="5" width="8" height="15" rx="4" fill="#0a6fd8"/><path d="M1 10q0 9 8 9t8-9M9 19v3M6 23h6" fill="none" stroke="#0a6fd8" stroke-width="2"/></svg></button>
    <button aria-label="键盘"><svg width="24" height="20" viewBox="0 0 24 20"><rect x="1" y="1" width="22" height="18" rx="2" fill="#fff" stroke="#0a6fd8" stroke-width="2"/><path d="M4 5h16M4 9h16" stroke="#0a6fd8" stroke-width="3" stroke-dasharray="3 1"/><path d="M5 15h14" stroke="#0a6fd8" stroke-width="3"/></svg></button>
    <button aria-label="皮肤"><svg width="28" height="32" viewBox="0 0 28 32"><defs><linearGradient id="shirt" x2="1" y2="1"><stop offset="0" stop-color="#ff5b68"/><stop offset=".6" stop-color="#a66cff"/><stop offset="1" stop-color="#42d2ff"/></linearGradient></defs><path d="M7 10q5 5 9 0l7 3-2 6-3-1v11H5V18l-3 1-2-6z" fill="url(#shirt)"/><circle cx="23" cy="5" r="5" fill="#fb4f2c"/></svg></button>
    <button aria-label="工具箱"><svg width="20" height="20" viewBox="0 0 20 20"><g fill="#0a6fd8"><rect width="9" height="9" rx="3"/><rect y="11" width="9" height="9" rx="3"/><rect x="11" y="11" width="9" height="9" rx="3"/></g><rect x="12" y="1" width="7" height="7" rx="3" fill="none" stroke="#0a6fd8" stroke-width="2"/></svg></button>
    <button class="pet"><svg width="32" height="30" viewBox="0 0 32 30"><ellipse cx="14" cy="16" rx="14" ry="14" fill="#fff" stroke="#f6e4e4"/><path d="M2 12q8-6 19-3v5q-4 4-9 2-3 4-8 2z" fill="#e0591d"/><circle cx="7" cy="15" r="3" fill="#222"/><path d="M12 20l3-2M17 22l-2 3" stroke="#222" stroke-width="2"/><path d="M28 7l1 4 3 1-3 1-1 4-2-4-2-1 2-1z" fill="#ffdc2e"/></svg></button>
  </div>

  <!-- MD5 dialog -->
  <section class="dialog">
    <header>
      <span class="md5-logo small">MD5</span>
      <h2>MD5助手 - v1.0.0.2</h2>
      <div class="window-buttons">
        <button aria-label="最小化"><svg width="16" height="16"><path d="M0 8.500h16" stroke="#000"/></svg></button>
        <button aria-label="最大化" disabled><svg width="16" height="16"><path d="M.5.5h15v15H.5z" fill="none" stroke="#ccc"/></svg></button>
        <button aria-label="关闭"><svg width="16" height="16"><path d="M0 0l16 16M16 0L0 16" stroke="#000"/></svg></button>
      </div>
    </header>
    <div class="dialog-tabs">
      <button>MD5生成器</button>
      <button class="active">MD5对比</button>
    </div>
    <div class="dialog-body">
      <div class="list">
        <table>
          <colgroup><col class="d-name"><col><col class="d-result"></colgroup>
          <thead><tr><th>文件名</th><th>MD5</th><th>对比结果</th></tr></thead>
          <tbody>
            <tr><td>update.img</td><td>935341012695c68cf2f15c7cf06f4ef1</td><td>以此为准</td></tr>
            <tr><td>AIO-3576Q38_Buildroot_251028.img</td><td>935341012695c68cf2f15c7cf06f4ef1</td><td>一致</td></tr>
          </tbody>
        </table>
      </div>
      <div class="actions">
        <button>添加</button>
        <button disabled>移除</button>
        <button>清空</button>
        <label><input type="checkbox">大写</label>
      </div>
    </div>
  </section>
</body>
</html>
```
FILE: styles.css
```css
/* Basic Reset */
* {
  margin: 0;
  padding: 0;
  box-sizing: border-box;
}

body {
  display: flex;
  flex-direction: column;
  min-height: 100vh;
  position: relative;
  background: #fff;
  color: #000;
  font-family: "Open Sans", "Noto Sans CJK SC", sans-serif;
  font-size: 18px;
  line-height: 24px;
  overflow-x: hidden;
}

button,
input {
  font: inherit;
  color: inherit;
  background: none;
  border: 0;
}

a {
  color: inherit;
  text-decoration: none;
}

h1,
h2,
th {
  font-size: inherit;
  font-weight: 400;
}

svg {
  display: block;
  flex: none;
}

.defs {
  position: absolute;
  width: 0;
  height: 0;
}

.ico-folder {
  width: 14px;
  height: 21px;
}

.md5-logo {
  width: 36px;
  height: 36px;
  background: #00c8ff;
  color: #fff;
  font-size: 15px;
  font-weight: 800;
  line-height: 36px;
  text-align: center;
}

.md5-logo.small {
  width: 24px;
  height: 24px;
  font-size: 10px;
  line-height: 24px;
}

/* Small pull-down handle at the top edge of the screen */
.screen-notch {
  position: absolute;
  top: 0;
  left: 50%;
  width: 362px;
  height: 2px;
  margin-left: -181px;
  background: #e2e2e2;
}

.screen-notch span {
  display: block;
  width: 72px;
  height: 2px;
  margin: 0 auto;
  background: #0a6fd8;
}

/* Title bar */
.titlebar {
  display: flex;
  height: 34px;
  line-height: 34px;
}

.quick-access {
  display: flex;
  align-items: center;
  width: 317px;
  padding-left: 4px;
  gap: 14px;
}

.quick-access .bar {
  width: 1px;
  height: 20px;
  background: #8c8c8c;
}

.quick-access button:first-of-type {
  margin-left: 3px;
}

.context-tab {
  width: 149px;
  background: #ffcfb8;
  text-align: center;
  color: #333;
  line-height: 32px;
}

.titlebar h1 {
  flex: 1;
  padding-left: 12px;
  font-size: 19px;
  color: #999;
}

.window-buttons {
  display: flex;
  align-items: center;
}

.window-buttons button {
  display: grid;
  place-items: center;
  width: 70px;
  height: 100%;
}

.titlebar .window-buttons {
  margin-right: 2px;
}

/* Ribbon tabs */
.tabs {
  display: flex;
  height: 38px;
  line-height: 36px;
  text-align: center;
  color: #222;
  border-bottom: 1px solid #dadbdc;
}

.tabs a {
  width: 77px;
}

.tabs .file {
  width: 84px;
  height: 34px;
  background: #0063b1;
  color: #fff;
}

.tabs .active {
  width: 76px;
  height: 38px;
  background: #f5f6f7;
  border: 1px solid #dadbdc;
  border-bottom: 0;
}

.tabs .tools {
  width: 150px;
  height: 28px;
  margin-left: 3px;
  border: 1px solid #dadbdc;
  border-width: 0 1px;
}

.tabs-right {
  display: flex;
  align-items: center;
  gap: 12px;
  margin-left: auto;
  padding-right: 5px;
}

.help {
  width: 22px;
  height: 22px;
  border-radius: 50%;
  background: #0067c5;
  color: #fff;
  line-height: 22px;
}

/* Ribbon */
.ribbon {
  display: flex;
  height: 150px;
  background: #f5f6f7;
  border-bottom: 1px solid #dadbdc;
  color: #222;
}

.group {
  display: flex;
  flex-direction: column;
  justify-content: space-between;
  height: 143px;
  margin-top: 3px;
  padding: 7px 0 1px;
  border-right: 1px solid #dadbdc;
}

.group h2 {
  padding-right: 9px;
  text-align: center;
  color: #444;
}

.tools-row {
  display: flex;
}

.clip {
  width: 368px;
  padding-left: 8px;
}

.organize {
  width: 273px;
  padding-left: 3px;
}

.create {
  width: 199px;
  padding-left: 5px;
  border-right: 0;
}

.open {
  width: 185px;
  padding-left: 5px;
}

.open h2 {
  border-left: 1px solid #dadbdc;
  margin-left: -5px;
}

.select {
  width: 124px;
  padding-left: 4px;
}

.big {
  display: flex;
  flex-direction: column;
  align-items: center;
  width: 62px;
  gap: 5px;
}

.big svg {
  width: 48px;
  height: 48px;
}

.big.wide {
  width: 80px;
  padding: 0 4px;
}

.big.copy {
  width: 60px;
}

.big.drop::after {
  content: "";
  margin-top: -6px;
  border: 5px solid transparent;
  border-top-color: #000;
  border-bottom: 0;
}

.ribbon button:disabled {
  color: #777;
}

.split {
  width: 2px;
  height: 100px;
  margin: 0 5px;
  background: #dfe1e3;
}

.stack {
  display: flex;
  flex-direction: column;
  margin-top: -4px;
  padding-left: 7px;
}

.stack button {
  display: flex;
  align-items: center;
  gap: 5px;
  height: 32px;
  white-space: nowrap;
}

.stack.loose {
  gap: 3px;
  margin-top: -1px;
}

.stack svg {
  width: 22px;
  height: 22px;
}

.stack .more::after {
  content: "";
  border: 5px solid transparent;
  border-top-color: #000;
  border-bottom: 0;
}

/* Address row */
.address-row {
  display: flex;
  align-items: center;
  height: 51px;
  padding-right: 12px;
}

.nav-buttons {
  display: flex;
  align-items: center;
  justify-content: space-between;
  width: 147px;
  padding-left: 19px;
}

.crumbs {
  display: flex;
  align-items: center;
  flex: 1;
  height: 34px;
  margin-left: 11px;
  padding-left: 7px;
  border: 1px solid #d9d9d9;
}

.crumbs a {
  line-height: 32px;
  padding-bottom: 2px;
}

.sep {
  width: 8px;
  height: 12px;
  margin: 0 13px;
}

.crumbs .ico-folder + .sep {
  margin: 0 9px 0 16px;
}

.history {
  margin-left: auto;
  padding-right: 5px;
}

.refresh {
  display: grid;
  place-items: center;
  width: 25px;
  height: 100%;
  border-left: 1px solid #d9d9d9;
}

.search {
  display: flex;
  align-items: center;
  width: 148px;
  height: 34px;
  margin-left: 12px;
  padding: 0 10px;
  border: 1px solid #d9d9d9;
}

.search input {
  flex: 1;
  min-width: 0;
  outline: 0;
}

.search input::placeholder {
  color: #6d6d6d;
  opacity: 1;
}

/* Panes */
.panes {
  display: flex;
  flex: 1;
}

.tree {
  width: 32%;
  list-style: none;
  font-size: 19px;
}

.tree li {
  display: flex;
  align-items: center;
  gap: 11px;
  height: 36px;
}

.tree .l0 { padding-left: 64px; }
.tree .l1 { padding-left: 76px; }
.tree .l2 { padding-left: 88px; }
.tree .l3 { padding-left: 100px; }
.tree .l4 { padding-left: 112px; }

.selected {
  background: #d9d9d9;
}

.hidden-item svg {
  opacity: 0.5;
}

.scrollbar {
  display: flex;
  flex-direction: column;
  align-items: center;
  width: 27px;
  padding: 10px 0 8px;
  background: #f0f0f0;
  border: solid #fff;
  border-width: 0 1px;
}

.track {
  flex: 1;
  align-self: stretch;
  margin: 10px 0;
}

.thumb {
  display: block;
  height: 269px;
  margin-top: 760px;
  background: #cdcdcd;
}

/* File list */
.files {
  flex: 1;
  margin-left: 2px;
  padding: 0 70px 0 23px;
  border-left: 1px solid #f0f0f0;
}

.files table {
  width: 100%;
  table-layout: fixed;
  border-spacing: 0;
}

.c-date { width: 243px; }
.c-type { width: 203px; }
.c-size { width: 135px; }
.c-len { width: 204px; }

.files th {
  position: relative;
  height: 40px;
  padding-left: 9px;
  border-right: 1px solid #e5e5e5;
  text-align: left;
  color: #4c607a;
}

.files th:first-child {
  padding-left: 5px;
}

.sorted svg {
  position: absolute;
  top: 1px;
  left: 47%;
}

.files tbody::before {
  content: "";
  display: block;
  height: 9px;
}

.files td {
  height: 32px;
  padding-left: 9px;
  color: #6d6d6d;
  font-size: 19px;
  white-space: nowrap;
}

.files td:first-child {
  display: flex;
  align-items: center;
  gap: 9px;
  color: #000;
}

.files td svg {
  width: 18px;
  height: 22px;
}

.files td:nth-child(3) {
  font-size: 18px;
}

.files td:nth-child(4) {
  padding-right: 11px;
  text-align: right;
}

.files td:last-child {
  border-right: 6px solid #fff;
}

/* Status bar */
.status {
  display: flex;
  align-items: center;
  height: 35px;
  padding-left: 23px;
  color: #1e395b;
}

.status > span {
  margin-right: 16px;
  padding-right: 17px;
  border-right: 1px solid #e8e8e8;
}

.views {
  display: flex;
  align-items: center;
  align-self: stretch;
  gap: 6px;
  margin-left: auto;
  padding-right: 13px;
}

.views .on {
  display: grid;
  place-items: center;
  width: 33px;
  height: 35px;
  background: #cbe8f6;
  border: 1px solid #26a0da;
}

/* Taskbar */
.taskbar {
  display: flex;
  height: 60px;
  background: linear-gradient(90deg, #d6e0dc 0 20%, #ebebeb 24% 69%, #d7e1dc 73%);
}

.taskbar button {
  display: flex;
  align-items: center;
  justify-content: center;
  position: relative;
}

.start {
  width: 77px;
  padding-right: 5px;
}

.task-group {
  display: flex;
}

.folders { width: 500px; }
.browsers { width: 429px; }

.task-group button {
  flex: 1;
}

.task-group .running::after {
  content: "";
  position: absolute;
  bottom: 0;
  left: 6px;
  right: 6px;
  height: 3px;
  background: #0078d7;
}

.task-group .named {
  gap: 8px;
  padding-left: 2px;
}

.browsers .named {
  gap: 4px;
}

.apps .running {
  flex: 0 0 72px;
}

.apps .pinned {
  flex: 0 0 61px;
}

.apps .current,
.apps .current ~ .running {
  flex-basis: 73px;
}

.apps .current {
  background: #f9f9f9;
}

.apps .current::after {
  left: 0;
  right: 0;
}

.news {
  gap: 15px;
  margin-left: 29px;
  font-size: 20px;
}

.tray {
  display: flex;
  align-items: center;
  gap: 14px;
  margin-left: auto;
  padding-right: 22px;
  border-right: 1px solid #a9b1ad;
  margin-right: 6px;
}

.ime {
  font-size: 20px;
}

.sogou {
  margin-left: 6px;
}

.taskbar .temp {
  width: 34px;
  height: 34px;
  margin-left: 8px;
  border-radius: 50%;
  background: #ff822d;
  color: #fff;
}

.tray time {
  text-align: center;
  font-size: 19px;
  line-height: 28px;
}

.taskbar .notice {
  width: 34px;
  height: 44px;
  margin-left: 10px;
  justify-content: flex-start;
}

.notice b {
  position: absolute;
  right: -4px;
  bottom: 2px;
  width: 32px;
  height: 26px;
  border: 1px solid #777;
  border-radius: 13px;
  background: #c9d0cd;
  line-height: 24px;
}

/* Input method bar */
.ime-bar {
  position: absolute;
  right: 81px;
  bottom: 90px;
  display: flex;
  align-items: center;
  justify-content: flex-end;
  width: 274px;
  height: 39px;
  border: 2px solid #cfdcec;
  border-radius: 3px;
  background: #fff;
}

.ime-bar button {
  display: grid;
  place-items: center;
  width: 36px;
}

.ime-bar .logo {
  position: absolute;
  left: -32px;
  bottom: -4px;
  width: 48px;
  height: 48px;
}

.ime-bar .lang {
  color: #0a6fd8;
  font-size: 22px;
  font-weight: 700;
}

/* MD5 dialog */
.dialog {
  position: absolute;
  top: 657px;
  left: 993px;
  width: 850px;
  background: #fff;
  border: 1px solid #777;
  box-shadow: 0 4px 14px rgba(0, 0, 0, 0.3);
}

.dialog header {
  display: flex;
  align-items: center;
  height: 38px;
  padding-left: 5px;
  gap: 5px;
}

.dialog header h2 {
  flex: 1;
}

.dialog-tabs {
  display: flex;
  align-items: flex-end;
  height: 55px;
  padding-left: 2px;
  background: #f0f0f0;
  border-bottom: 1px solid #dcdcdc;
}

.dialog-tabs button {
  width: 123px;
  height: 34px;
  border: 1px solid #dcdcdc;
  border-bottom: 0;
}

.dialog-tabs .active {
  width: 114px;
  height: 37px;
  margin-bottom: -1px;
  padding-bottom: 3px;
  background: #fff;
}

.dialog-body {
  padding: 24px 15px 17px 16px;
}

.list {
  height: 297px;
  padding: 2px 3px 2px 8px;
  border: 1px solid #828790;
}

.list table {
  width: 100%;
  table-layout: fixed;
  border-spacing: 0;
}

.d-name { width: 325px; }
.d-result { width: 98px; }

.list th {
  height: 37px;
  border-right: 1px solid #e5e5e5;
}

.list td {
  height: 31px;
  background: #f3f3f3;
  color: #1a1aff;
  text-align: center;
  white-space: nowrap;
}

.list th:first-child,
.list td:first-child {
  padding-left: 4px;
  text-align: left;
}

.actions {
  display: flex;
  align-items: center;
  gap: 34px;
  padding: 20px 6px 0 11px;
}

.actions button {
  width: 74px;
  height: 38px;
  background: #e1e1e1;
  border: 1px solid #adadad;
}

.actions button:disabled {
  background: #ccc;
  border-color: #bfbfbf;
  color: #8a8a8a;
}

.actions label {
  display: flex;
  align-items: center;
  gap: 6px;
  margin-left: auto;
}

.actions input {
  appearance: none;
  width: 18px;
  height: 18px;
  border: 2px solid #333;
  background: #fff;
}
```
